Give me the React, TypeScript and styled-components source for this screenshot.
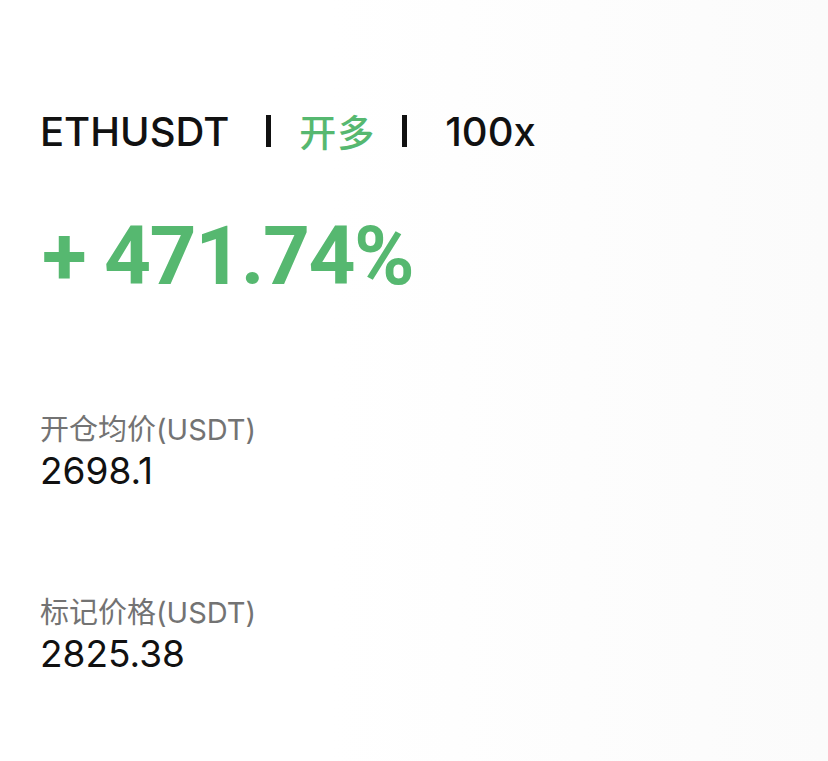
import React from 'react'
import styled, { createGlobalStyle } from 'styled-components'

const GlobalStyle = createGlobalStyle`
  html, body {
    margin: 0;
    padding: 0;
    background: #fefefe;
  }
  body {
    font-family: Inter, "Noto Sans", "Noto Sans CJK SC", sans-serif;
  }
`

const Page = styled.div`
  width: 828px;
  height: 761px;
  box-sizing: border-box;
  padding: 103px 0 0 40px;
  background: linear-gradient(90deg, #ffffff 0%, #ffffff 40%, #fbfbfb 100%);
  overflow: hidden;
`

const TitleRow = styled.div`
  display: flex;
  align-items: center;
  height: 56px;
  font-size: 40px;
  font-weight: 500;
  color: #111;
`

const Divider = styled.span<{ $gapLeft: number; $gapRight: number }>`
  display: inline-block;
  width: 5px;
  height: 32px;
  background: #111;
  margin: 0 ${(p) => p.$gapRight}px 0 ${(p) => p.$gapLeft}px;
`

const Side = styled.span`
  color: #56b870;
  font-family: "Noto Sans CJK SC", sans-serif;
  font-size: 37px;
  letter-spacing: 1px;
`

const Profit = styled.div`
  margin-top: 47px;
  padding-left: 2px;
  font-family: Roboto, Inter, sans-serif;
  font-size: 82px;
  font-weight: 700;
  color: #56b870;
  line-height: 100px;
  letter-spacing: -1.5px;
`

const Field = styled.div<{ $top: number }>`
  margin-top: ${(p) => p.$top}px;
  display: flex;
  flex-direction: column;
`

const Label = styled.div`
  font-family: Inter, "Noto Sans CJK SC", sans-serif;
  font-size: 29px;
  color: #737373;
  line-height: 38px;
`

const Value = styled.div`
  font-size: 37px;
  color: #111;
  line-height: 44px;
`

export default function App() {
  return (
    <>
      <GlobalStyle />
      <Page>
        <TitleRow>
          <span>ETHUSDT</span>
          <Divider $gapLeft={37} $gapRight={28} />
          <Side>开多</Side>
          <Divider $gapLeft={27} $gapRight={38} />
          <span>100x</span>
        </TitleRow>
        <Profit>+ 471.74%</Profit>
        <Field $top={105}>
          <Label>开仓均价(USDT)</Label>
          <Value>2698.1</Value>
        </Field>
        <Field $top={101}>
          <Label>标记价格(USDT)</Label>
          <Value>2825.38</Value>
        </Field>
      </Page>
    </>
  )
}
